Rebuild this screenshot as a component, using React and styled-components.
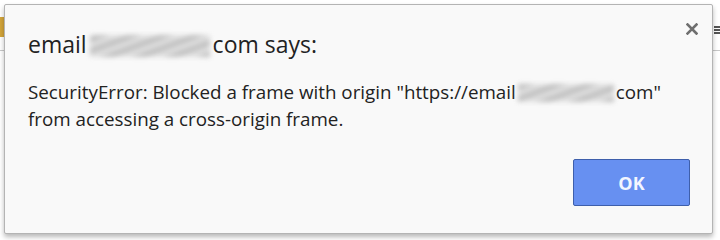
import styled, { createGlobalStyle } from "styled-components"

const GlobalStyle = createGlobalStyle`
  html, body {
    margin: 0;
    padding: 0;
    background: #ffffff;
  }
  body {
    font-family: "Open Sans", "Noto Sans", "Liberation Sans", sans-serif;
  }
`

const Page = styled.div`
  position: relative;
  width: 720px;
  height: 240px;
  overflow: hidden;
  background: #ffffff;
  display: flex;
  justify-content: space-between;
`

const PageEdge = styled.div`
  width: ${p => p.$w}px;
  display: flex;
  flex-direction: column;
  align-items: flex-end;
`

const Tab = styled.div`
  margin-top: 17px;
  width: 4px;
  height: 20px;
  background: #d3a53a;
`

const Rule = styled.div`
  margin-top: ${p => p.$top}px;
  width: 100%;
  height: 1px;
  background: #c8c8c8;
`

const MenuLines = styled.div`
  margin-top: 26px;
  width: 6px;
  height: 8px;
  border-top: 2px solid #555;
  border-bottom: 2px solid #555;
  box-sizing: border-box;
  position: relative;

  &::after {
    content: "";
    position: absolute;
    left: 0;
    right: 0;
    top: 1px;
    height: 2px;
    background: #555;
  }
`

const Dialog = styled.div`
  position: absolute;
  left: 4px;
  top: 4px;
  width: 709px;
  height: 230px;
  box-sizing: border-box;
  background: #f9f9f9;
  border: 1px solid #b4b4b4;
  border-radius: 2px;
  box-shadow: 0 3px 5px rgba(0, 0, 0, 0.28);
  padding: 24px 22px 0 23px;
  display: flex;
  flex-direction: column;
`

const Header = styled.div`
  display: flex;
  justify-content: space-between;
  align-items: flex-start;
`

const Title = styled.h1`
  margin: 0;
  font-size: 23px;
  font-weight: 400;
  line-height: 31px;
  color: #222;
`

const Close = styled.button`
  margin: -10px -12px 0 0;
  padding: 0;
  border: none;
  background: none;
  width: 20px;
  height: 20px;
  display: flex;
  align-items: center;
  justify-content: center;
  cursor: pointer;
`

const Message = styled.p`
  margin: 19px 0 0;
  font-size: 18.8px;
  line-height: 27px;
  color: #222;
`

const Redacted = styled.span`
  display: inline-block;
  width: ${p => p.$w}px;
  height: ${p => p.$h}px;
  margin: 0 ${p => p.$gap}px;
  vertical-align: ${p => p.$drop}px;
  background:
    repeating-linear-gradient(
      -20deg,
      rgba(150, 150, 150, 0.55) 0 5px,
      rgba(215, 215, 215, 0.5) 5px 11px
    ),
    #dcdcdc;
  filter: blur(2.5px);
  opacity: 0.85;
`

const Footer = styled.div`
  margin-top: 26px;
  display: flex;
  justify-content: flex-end;
`

const OkButton = styled.button`
  width: 117px;
  height: 47px;
  box-sizing: border-box;
  border: 1px solid #3e5fab;
  border-radius: 2px;
  background: #6790f1;
  color: #f3f6ff;
  font-family: "Open Sans", "Noto Sans", sans-serif;
  font-size: 18px;
  font-weight: 700;
  cursor: pointer;
`

const App = () => {
  return (
    <>
      <GlobalStyle />
      <Page>
        <PageEdge $w={4}>
          <Tab />
          <Rule $top={13} />
        </PageEdge>
        <PageEdge $w={8}>
          <MenuLines />
          <Rule $top={16} />
        </PageEdge>

        <Dialog>
          <Header>
            <Title>
              email<Redacted $w={120} $h={22} $gap={3} $drop={-4} />com says:
            </Title>
            <Close aria-label="Close">
              <svg width="12" height="12" viewBox="0 0 12 12">
                <path d="M1.5 1.5 L10.5 10.5 M10.5 1.5 L1.5 10.5" stroke="#6f6f6f" strokeWidth="2.6" strokeLinecap="square" />
              </svg>
            </Close>
          </Header>
          <Message>
            SecurityError: Blocked a frame with origin "https://email<Redacted $w={96} $h={18} $gap={2} $drop={-3} />com"
            <br />
            from accessing a cross-origin frame.
          </Message>
          <Footer>
            <OkButton>OK</OkButton>
          </Footer>
        </Dialog>
      </Page>
    </>
  )
}

export default App
